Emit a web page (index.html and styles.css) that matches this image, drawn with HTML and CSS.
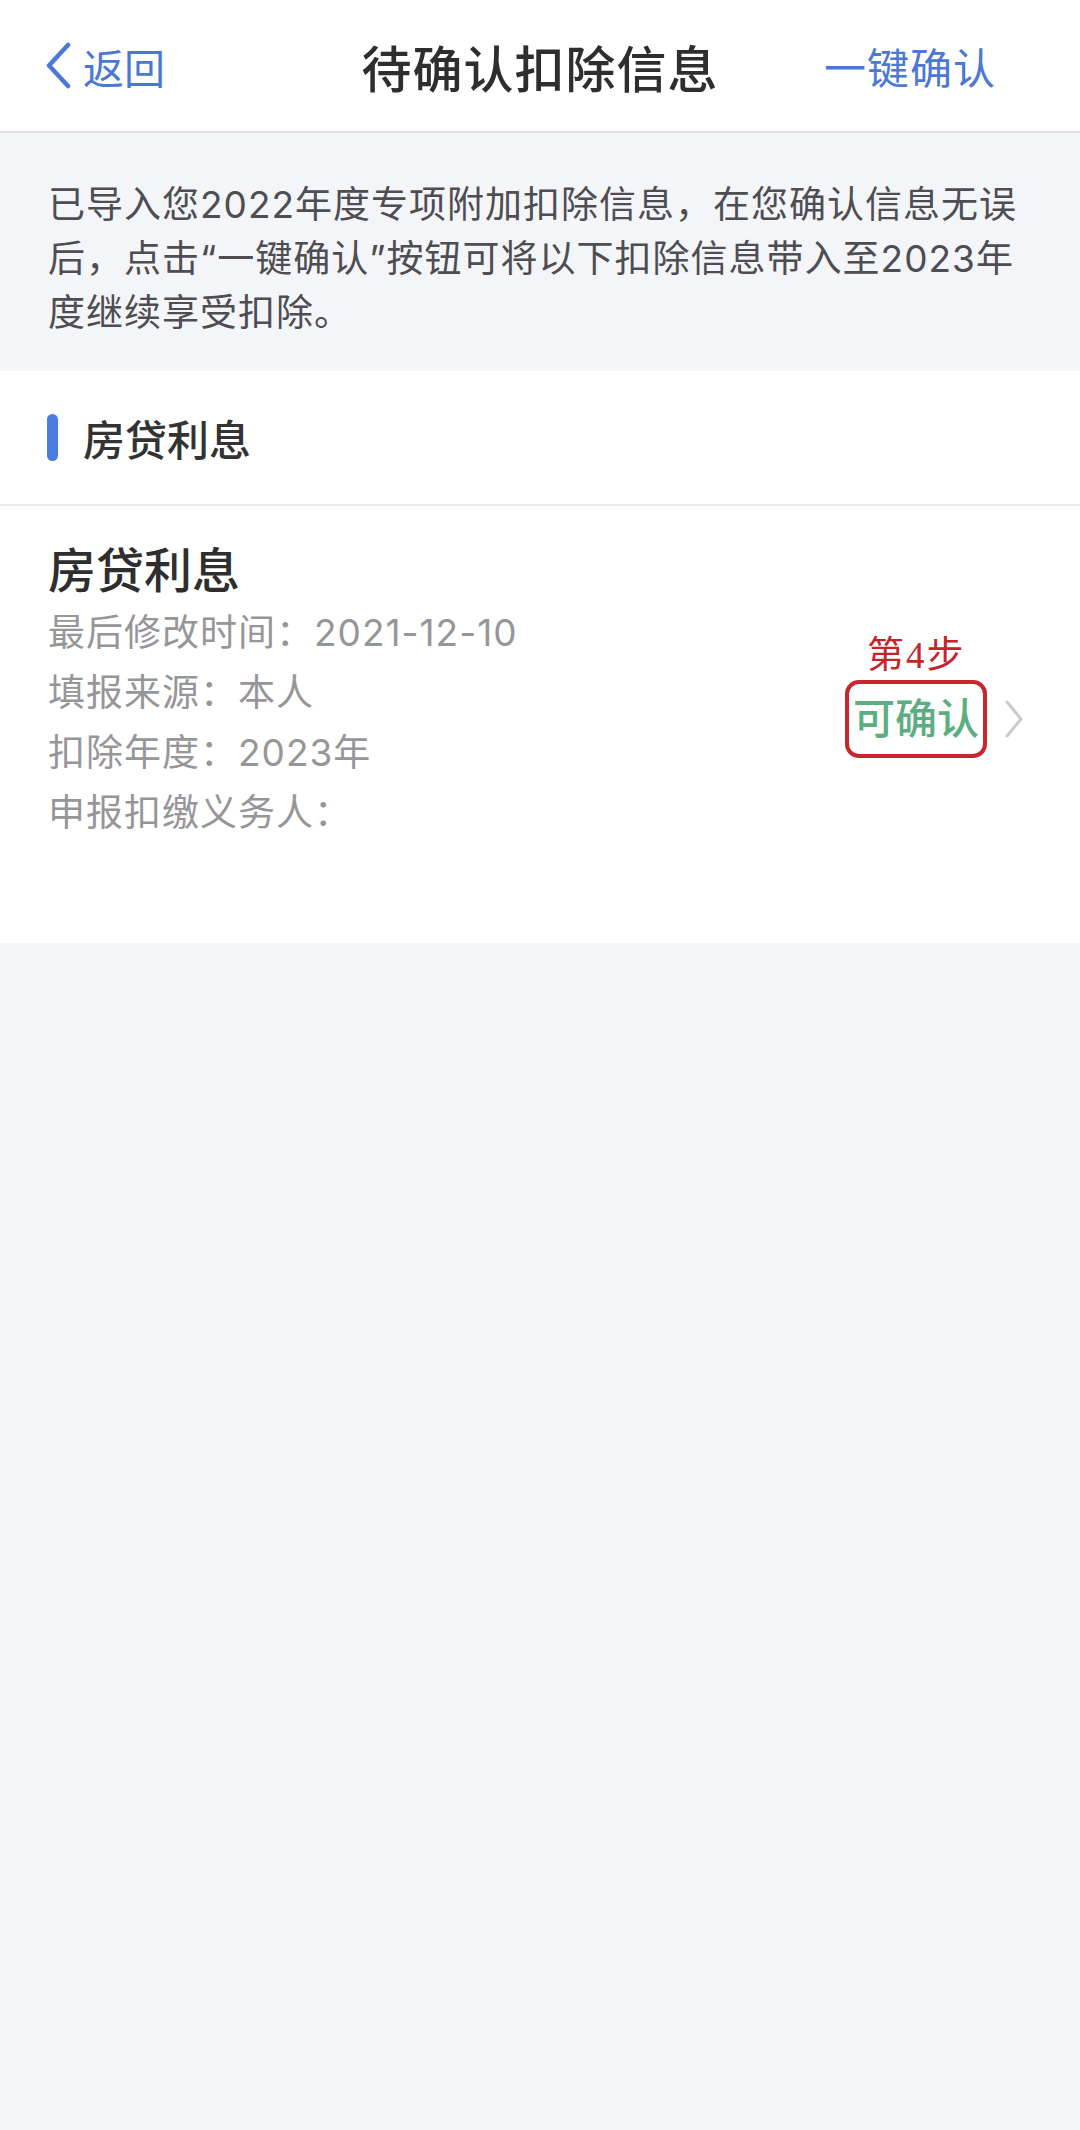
FILE: index.html
```html
<!DOCTYPE html>
<html lang="zh-CN">
<head>
    <meta charset="UTF-8">
    <meta name="viewport" content="width=device-width, initial-scale=1.0">
    <title>待确认扣除信息</title>
    <link rel="stylesheet" href="styles.css">
</head>
<body>
    <header class="nav">
        <a class="nav-back" href="#">
            <svg class="nav-back-icon" width="26" height="47" viewBox="0 0 26 47">
                <polyline points="23,3 4,23.5 23,44" fill="none" stroke="#4a78d4" stroke-width="4.5" stroke-linecap="round" stroke-linejoin="round"/>
            </svg>
            返回
        </a>
        <h1 class="nav-title">待确认扣除信息</h1>
        <a class="nav-action" href="#">一键确认</a>
    </header>

    <p class="intro">已导入您2022年度专项附加扣除信息，在您确认信息无误<br>后，点击“一键确认”按钮可将以下扣除信息带入至2023年<br>度继续享受扣除。</p>

    <div class="section-head">
        <span class="section-bar"></span>
        <span class="section-title">房贷利息</span>
    </div>

    <div class="card">
        <div class="card-info">
            <div class="card-title">房贷利息</div>
            <div class="card-row">最后修改时间：2021-12-10</div>
            <div class="card-row">填报来源：本人</div>
            <div class="card-row">扣除年度：2023年</div>
            <div class="card-row">申报扣缴义务人：</div>
        </div>
        <div class="card-status">
            <div class="status-box">
                <span class="step-note">第4步</span>
                可确认
            </div>
            <svg class="status-arrow" width="20" height="38" viewBox="0 0 20 38">
                <polyline points="3,2 17,19 3,36" fill="none" stroke="#cbcbcf" stroke-width="3" stroke-linecap="round" stroke-linejoin="round"/>
            </svg>
        </div>
    </div>
</body>
</html>
```

FILE: styles.css
```css
body {
    margin: 0;
    min-height: 100vh;
    background-color: #f4f5f9;
    font-family: Inter, "Noto Sans CJK SC", sans-serif;
    color: #333;
}

a {
    text-decoration: none;
}

.nav {
    display: grid;
    grid-template-columns: 1fr auto 1fr;
    align-items: center;
    height: 131px;
    padding: 0 45px;
    background-color: #fff;
    border-bottom: 2px solid #e2e2e5;
}

.nav-back {
    display: flex;
    align-items: center;
    gap: 12px;
    justify-self: start;
    font-size: 41px;
    color: #4a78d4;
}

.nav-title {
    margin: 0;
    font-size: 50px;
    font-weight: 500;
    letter-spacing: 1px;
    color: #2e2e2e;
}

.nav-action {
    justify-self: end;
    margin-right: 39px;
    font-size: 42px;
    letter-spacing: 1px;
    color: #4a78d4;
}

.intro {
    margin: 0;
    padding: 45px 30px 31px 48px;
    font-size: 37px;
    line-height: 54px;
    letter-spacing: 1px;
    white-space: nowrap;
    color: #4d4d52;
}

.section-head {
    display: flex;
    align-items: center;
    gap: 25px;
    height: 133px;
    padding-left: 47px;
    background-color: #fff;
    border-bottom: 2px solid #ececef;
}

.section-bar {
    width: 11px;
    height: 47px;
    border-radius: 6px;
    background-color: #4a7be0;
}

.section-title {
    font-size: 42px;
    font-weight: 500;
    color: #333;
}

.card {
    display: flex;
    background-color: #fff;
    padding-right: 56px;
}

.card-info {
    flex: 1;
    padding: 33px 0 100px 48px;
}

.card-title {
    font-size: 48px;
    line-height: 64px;
    font-weight: 500;
    color: #2e2e2e;
}

.card-row {
    font-size: 37px;
    line-height: 60px;
    letter-spacing: 1px;
    color: #969699;
}

.card-status {
    display: flex;
    align-items: center;
    gap: 17px;
    align-self: center;
    margin-bottom: 12px;
}

.status-box {
    position: relative;
    padding: 0 4px;
    border: 4px solid #c8262e;
    border-radius: 14px;
    font-size: 42px;
    line-height: 70px;
    font-weight: 500;
    color: #5aae7f;
}

.step-note {
    position: absolute;
    left: 18px;
    bottom: 100%;
    margin-bottom: 8px;
    font-family: "Liberation Serif", "Noto Sans CJK SC", serif;
    font-size: 37px;
    line-height: 40px;
    font-weight: 400;
    letter-spacing: 2px;
    white-space: nowrap;
    color: #c8232b;
}
```
